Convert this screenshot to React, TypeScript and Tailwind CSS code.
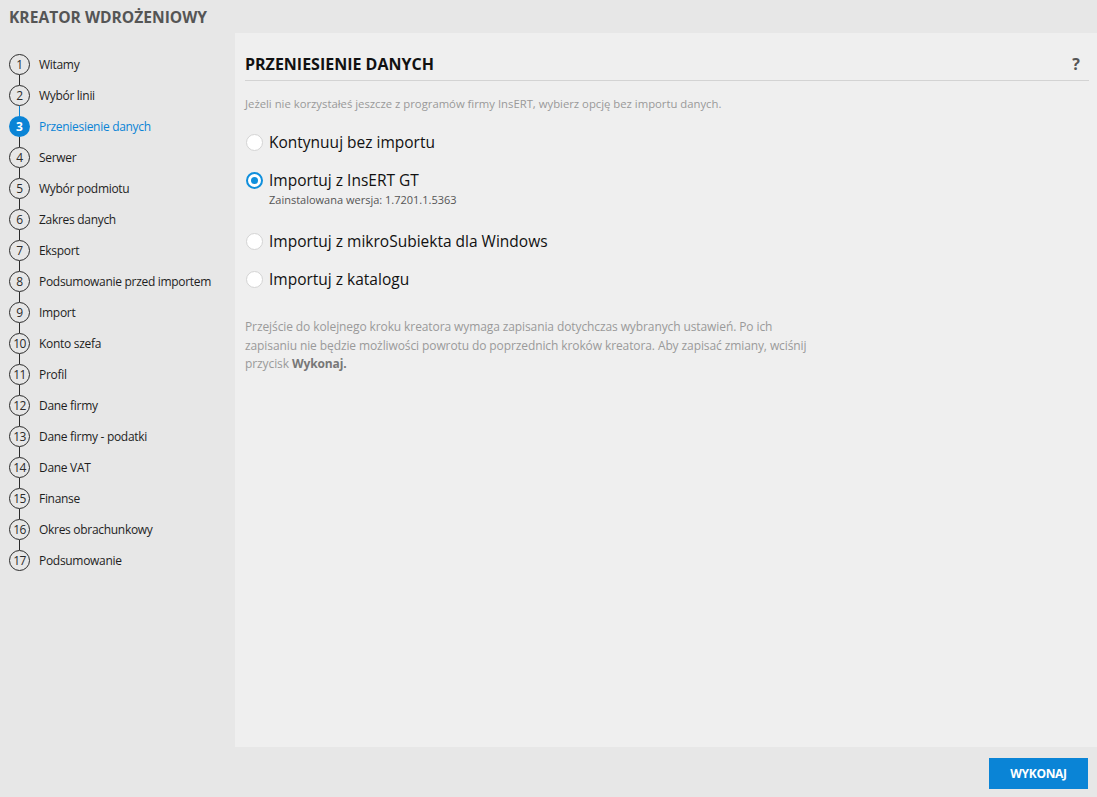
const steps = [
  "Witamy",
  "Wybór linii",
  "Przeniesienie danych",
  "Serwer",
  "Wybór podmiotu",
  "Zakres danych",
  "Eksport",
  "Podsumowanie przed importem",
  "Import",
  "Konto szefa",
  "Profil",
  "Dane firmy",
  "Dane firmy - podatki",
  "Dane VAT",
  "Finanse",
  "Okres obrachunkowy",
  "Podsumowanie",
];

const current = 3;

function Radio({ checked }: { checked?: boolean }) {
  if (checked) {
    return (
      <span className="flex h-[17px] w-[17px] shrink-0 items-center justify-center rounded-full border-2 border-[#0f8fdc] bg-white">
        <span className="h-[7px] w-[7px] rounded-full bg-[#0f8fdc]" />
      </span>
    );
  }
  return <span className="h-[17px] w-[17px] shrink-0 rounded-full border border-[#d4d4d4] bg-white" />;
}

function Option({ label, checked, children }: { label: string; checked?: boolean; children?: React.ReactNode }) {
  return (
    <div>
      <label className="flex items-center gap-[6px]">
        <Radio checked={checked} />
        <span className="text-[15.5px] leading-[20px] text-[#111]">{label}</span>
      </label>
      {children}
    </div>
  );
}

export default function App() {
  return (
    <div
      className="flex h-[797px] w-[1097px] flex-col bg-[#e7e7e7] text-[#1e1e1e]"
      style={{ fontFamily: '"Segoe UI", "Open Sans", sans-serif' }}
    >
      <div className="flex flex-1">
        {/* sidebar */}
        <aside className="w-[235px] shrink-0">
          <div className="h-[33px] whitespace-nowrap pl-[9px] pt-[7px] text-[15.6px] font-bold leading-[20px] text-[#555555]">
            KREATOR WDROŻENIOWY
          </div>
          <ol className="pl-[9px] pt-[21px]">
            {steps.map((s, i) => {
              const n = i + 1;
              const active = n === current;
              const last = n === steps.length;
              return (
                <li key={s} className="flex items-start">
                  <div className="flex w-[21px] flex-col items-center">
                    <span
                      className={
                        active
                          ? "flex h-[21px] w-[21px] items-center justify-center rounded-full bg-[#0a84d6] text-[12px] font-bold text-white"
                          : "flex h-[21px] w-[21px] items-center justify-center rounded-full border border-[#2b2b2b] text-[12px] tracking-[-0.5px] text-[#2b2b2b]"
                      }
                    >
                      {n}
                    </span>
                    {!last && (
                      <span className={"h-[10px] w-px " + (n === current - 1 ? "bg-[#0a84d6]" : "bg-[#2b2b2b]")} />
                    )}
                  </div>
                  <span
                    className={
                      "ml-[9px] text-[12px] leading-[21px] tracking-[-0.3px] " +
                      (active ? "text-[#0a84d6]" : "text-[#1e1e1e]")
                    }
                  >
                    {s}
                  </span>
                </li>
              );
            })}
          </ol>
        </aside>

        {/* main panel */}
        <main className="mt-[33px] flex-1 bg-[#efefef] pl-[10px] pr-[8px]">
          <div className="flex items-center justify-between border-b border-[#d3d3d3] pb-[6px] pt-[21px]">
            <h1 className="text-[16px] font-bold leading-[20px] text-[#111]">PRZENIESIENIE DANYCH</h1>
            <span className="pr-[9px] text-[16px] font-bold leading-[20px] text-[#555]">?</span>
          </div>
          <p className="mt-[15px] text-[11.3px] leading-[16px] text-[#999]">
            Jeżeli nie korzystałeś jeszcze z programów firmy InsERT, wybierz opcję bez importu danych.
          </p>
          <div className="mt-[20px] flex flex-col gap-[18px] pl-[1px]">
            <Option label="Kontynuuj bez importu" />
            <Option label="Importuj z InsERT GT" checked>
              <div className="mt-[2px] pl-[23px] text-[11px] leading-[16px] text-[#555]">
                Zainstalowana wersja: 1.7201.1.5363
              </div>
            </Option>
            <div className="mt-[5px]">
              <Option label="Importuj z mikroSubiekta dla Windows" />
            </div>
            <Option label="Importuj z katalogu" />
          </div>
          <p className="mt-[29px] whitespace-nowrap text-[12px] leading-[18.5px] tracking-[-0.1px] text-[#9a9a9a]">
            Przejście do kolejnego kroku kreatora wymaga zapisania dotychczas wybranych ustawień. Po ich
            <br />
            zapisaniu nie będzie możliwości powrotu do poprzednich kroków kreatora. Aby zapisać zmiany, wciśnij
            <br />
            przycisk <b className="text-[#777]">Wykonaj.</b>
          </p>
        </main>
      </div>

      {/* bottom bar */}
      <div className="flex h-[50px] shrink-0 items-start justify-end pr-[9px] pt-[11px]">
        <button className="h-[31px] w-[99px] bg-[#0a84d6] text-[12px] font-bold tracking-[-0.3px] text-white">
          WYKONAJ
        </button>
      </div>
    </div>
  );
}
